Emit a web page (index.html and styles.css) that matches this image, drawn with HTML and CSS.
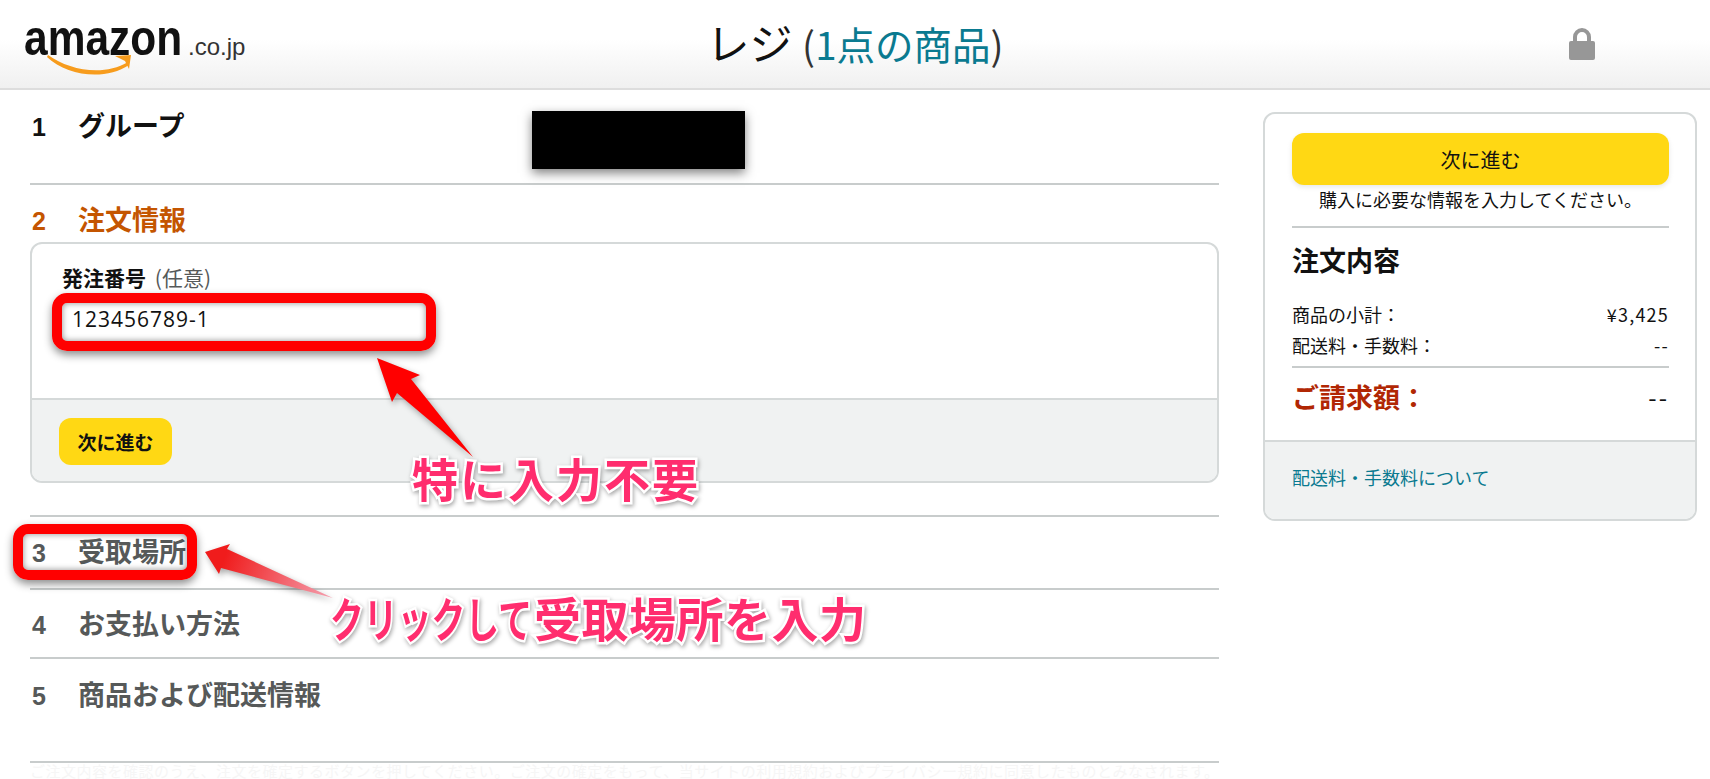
FILE: index.html
```html
<!DOCTYPE html>
<html lang="ja">

<head>
    <meta charset="utf-8">
    <meta name="viewport" content="width=device-width, initial-scale=1.0">
    <title>レジ</title>
    <link rel="stylesheet" href="styles.css">
</head>

<body>
    <header class="top-bar">
        <div class="logo">
            <span class="logo-word">amazon</span><span class="logo-tld">.co.jp</span>
            <svg class="logo-smile" width="90" height="24" viewBox="0 0 90 24">
                <path d="M1 2C22 17 56 24 81 9L82 12C58 28 20 23 0 4Z" fill="#f79c1d" />
                <path d="M68 3L84 2L82 16L78 8Z" fill="#f79c1d" />
            </svg>
        </div>
        <h1 class="page-title">レジ <span class="paren">(<a class="item-count">1点の商品</a>)</span></h1>
        <svg class="lock" width="28" height="32" viewBox="0 0 28 32">
            <path d="M7 14V9a7 7 0 0 1 14 0v5" fill="none" stroke="#979797" stroke-width="4" />
            <rect x="1" y="13" width="26" height="19" rx="2" fill="#979797" />
        </svg>
    </header>

    <main class="page">
        <div class="steps">
            <section class="step step-one">
                <h2 class="step-title"><span class="step-no">1</span>グループ</h2>
                <div class="redacted"></div>
            </section>

            <section class="step step-two">
                <h2 class="step-title active"><span class="step-no">2</span>注文情報</h2>
                <div class="order-box">
                    <div class="order-body">
                        <label class="field-label" for="poNumber">発注番号 <span class="optional">(任意)</span></label>
                        <div class="field-wrap">
                            <input class="field" id="poNumber" type="text" value="123456789-1">
                            <div class="ring"></div>
                        </div>
                    </div>
                    <div class="order-foot">
                        <button class="btn-next" type="button">次に進む</button>
                    </div>
                </div>
            </section>

            <section class="step step-three">
                <h2 class="step-title muted">
                    <span class="ring-wrap"><span class="step-no">3</span>受取場所<span class="ring ring-step"></span></span>
                </h2>
            </section>

            <section class="step step-four">
                <h2 class="step-title muted"><span class="step-no">4</span>お支払い方法</h2>
            </section>

            <section class="step step-five">
                <h2 class="step-title muted"><span class="step-no">5</span>商品および配送情報</h2>
            </section>

            <p class="faint-note">ご注文内容を確認のうえ、注文を確定するボタンを押してください。ご注文の確定をもって、当サイトの利用規約およびプライバシー規約に同意したものとみなされます。</p>
        </div>

        <aside class="summary">
            <div class="summary-body">
                <button class="btn-wide" type="button">次に進む</button>
                <p class="hint">購入に必要な情報を入力してください。</p>
                <h3 class="summary-title">注文内容</h3>
                <div class="row"><span>商品の小計：</span><span class="amount">¥3,425</span></div>
                <div class="row"><span>配送料・手数料：</span><span class="amount">--</span></div>
                <div class="row total"><span>ご請求額：</span><span class="total-value">--</span></div>
            </div>
            <div class="summary-foot">
                <a class="link">配送料・手数料について</a>
            </div>
        </aside>
    </main>

    <!-- 注釈の矢印と文字 -->
    <svg class="arrows" width="1710" height="779" viewBox="0 0 1710 779">
        <defs>
            <linearGradient id="fade" x1="205" y1="552" x2="333" y2="598" gradientUnits="userSpaceOnUse">
                <stop offset="0.15" stop-color="#f01c1c" />
                <stop offset="1" stop-color="#f5a0b0" />
            </linearGradient>
        </defs>
        <path d="M377 358L420 375L411 379L473 457L397 393L392 402Z" fill="#ff0000" />
        <path d="M205 552L230 544L227 549L333 598L221 568L219 574Z" fill="url(#fade)" />
    </svg>
    <div class="note note-one">特に入力不要</div>
    <div class="note note-two"><span class="note-kana">クリックして</span>受取場所を入力</div>
</body>

</html>
```

FILE: styles.css
```css
html, body {
    height: 779px;
    overflow: hidden;
}

body {
    margin: 0;
    background-color: #fff;
    color: #111;
    font-family: "Noto Sans CJK JP", sans-serif;
}

/* ヘッダー */
.top-bar {
    display: grid;
    grid-template-columns: 1fr auto 1fr;
    align-items: center;
    height: 88px;
    box-sizing: content-box;
    border-bottom: 2px solid #ddd;
    background: linear-gradient(to bottom, #fff 45%, #f0f0f0 100%);
}

.logo {
    position: relative;
    padding-left: 24px;
    height: 88px;
    box-sizing: border-box;
    white-space: nowrap;
}

.logo-word {
    display: inline-block;
    width: 155px;
    font-family: "Liberation Sans", sans-serif;
    font-size: 50px;
    font-weight: 700;
    line-height: 76px;
    transform: scaleX(0.85);
    transform-origin: left;
}

.logo-tld {
    margin-left: 9px;
    font-family: "Liberation Sans", sans-serif;
    font-size: 24px;
    color: #333;
}

.logo-smile {
    position: absolute;
    left: 47px;
    top: 53px;
}

.page-title {
    margin: 0 0 4px;
    font-size: 43px;
    font-weight: 400;
    line-height: 60px;
    color: #111;
}

.paren {
    font-size: 38.5px;
    color: #333;
}

.item-count {
    color: #0a7a90;
}

.lock {
    justify-self: end;
    margin-right: 114px;
}

/* 本体 */
.page {
    display: flex;
    gap: 44px;
    padding: 0 13px 0 30px;
}

.steps {
    width: 1189px;
    flex-shrink: 0;
}

.step {
    position: relative;
    border-bottom: 2px solid #c8cccc;
}

.step-one {
    padding: 20px 0 41px;
}

.step-two {
    padding: 19px 0 32px;
}

.step-three {
    padding: 19px 0 20px;
}

.step-four {
    padding: 18px 0 17px;
}

.step-five {
    padding: 20px 0 50px;
}

.step-title {
    margin: 0;
    font-size: 27px;
    font-weight: 700;
    line-height: 30px;
    color: #111;
}

.step-title.active {
    color: #c45500;
}

.step-title.muted {
    color: #565959;
}

.step-no {
    display: inline-block;
    width: 48px;
    padding-left: 2px;
    box-sizing: border-box;
    font-family: "Liberation Sans", sans-serif;
    font-size: 25px;
}

.redacted {
    position: absolute;
    left: 502px;
    top: 21px;
    width: 213px;
    height: 58px;
    background-color: #000;
    box-shadow: 0 4px 10px rgba(0, 0, 0, 0.5);
}

.order-box {
    margin-top: 6px;
    border: 2px solid #d5d9d9;
    border-radius: 12px;
    overflow: hidden;
}

.order-body {
    height: 154px;
    box-sizing: border-box;
    padding: 19px 30px 0;
}

.field-label {
    display: block;
    font-size: 21px;
    font-weight: 700;
    line-height: 28px;
}

.optional {
    margin-left: 4px;
    font-weight: 400;
    color: #565959;
}

.field-wrap {
    position: relative;
    width: 364px;
    margin-top: 13px;
}

.field {
    display: block;
    width: 100%;
    height: 33px;
    box-sizing: border-box;
    padding: 0 0 4px 10px;
    border: none;
    font-family: "Open Sans", sans-serif;
    font-size: 21px;
    letter-spacing: 1px;
    color: #111;
    background: transparent;
}

.ring {
    position: absolute;
    left: -10px;
    right: -10px;
    top: -11px;
    bottom: -14px;
    border: 10px solid #f00;
    border-radius: 15px;
    box-shadow: 0 4px 9px rgba(0, 0, 0, 0.45), inset 0 0 6px rgba(0, 0, 0, 0.45);
}

.ring-wrap {
    position: relative;
    display: inline-block;
}

.ring-step {
    left: -17px;
    right: -11px;
    top: -12px;
    bottom: -12px;
}

.order-foot {
    height: 83px;
    box-sizing: border-box;
    padding: 18px 27px 0;
    border-top: 2px solid #d5d9d9;
    background-color: #f0f2f2;
}

.btn-next {
    width: 113px;
    height: 47px;
    border: none;
    border-radius: 12px;
    background-color: #ffd814;
    font-family: inherit;
    font-size: 19px;
    font-weight: 700;
    color: #111;
}

.faint-note {
    margin: 0;
    font-size: 15px;
    line-height: 16px;
    color: #f6f6f6;
    text-align-last: justify;
}

/* 注文内容 */
.summary {
    width: 434px;
    height: 409px;
    margin-top: 22px;
    box-sizing: border-box;
    border: 2px solid #d5d9d9;
    border-radius: 12px;
    overflow: hidden;
}

.summary-body {
    height: 326px;
    box-sizing: border-box;
    padding: 19px 26px 0 27px;
}

.btn-wide {
    display: block;
    width: 100%;
    height: 52px;
    border: none;
    border-radius: 12px;
    background-color: #ffd814;
    box-shadow: 0 2px 5px rgba(213, 217, 217, 0.6);
    font-family: inherit;
    font-size: 20px;
    color: #111;
}

.hint {
    margin: 1px 0 0;
    padding-bottom: 14px;
    border-bottom: 2px solid #c8cccc;
    font-size: 18px;
    line-height: 26px;
    text-align: center;
}

.summary-title {
    margin: 15px 0 22px;
    font-size: 27px;
    font-weight: 700;
    line-height: 34px;
}

.row {
    display: flex;
    justify-content: space-between;
    font-size: 18px;
    line-height: 31px;
}

.amount {
    letter-spacing: 1.2px;
}

.row.total {
    margin-top: 5px;
    padding-top: 10px;
    border-top: 2px solid #c8cccc;
    font-size: 27px;
    font-weight: 700;
    line-height: 38px;
    color: #b12704;
}

.total-value {
    font-size: 24px;
    font-weight: 400;
    letter-spacing: 2px;
    color: #111;
}

.summary-foot {
    height: 80px;
    box-sizing: border-box;
    padding: 20px 0 0 27px;
    border-top: 2px solid #d5d9d9;
    background-color: #f0f2f2;
}

.link {
    font-size: 18px;
    line-height: 30px;
    color: #0a7a90;
}

/* 注釈 */
.arrows {
    position: absolute;
    left: 0;
    top: 0;
    pointer-events: none;
    filter: drop-shadow(2px 3px 3px rgba(0, 0, 0, 0.35));
}

.note {
    position: absolute;
    font-weight: 700;
    line-height: 60px;
    color: #ff2d6e;
    white-space: nowrap;
    -webkit-text-stroke: 5px #fff;
    paint-order: stroke fill;
    filter: drop-shadow(1px 2px 2px rgba(0, 0, 0, 0.35));
}

.note-one {
    left: 412px;
    top: 447px;
    font-size: 46px;
    letter-spacing: 2px;
}

.note-two {
    left: 330px;
    top: 587px;
    font-size: 47px;
    letter-spacing: 0.5px;
}

.note-kana {
    display: inline-block;
    width: 204px;
    letter-spacing: 0;
    transform: scaleX(0.72);
    transform-origin: left;
}
```
